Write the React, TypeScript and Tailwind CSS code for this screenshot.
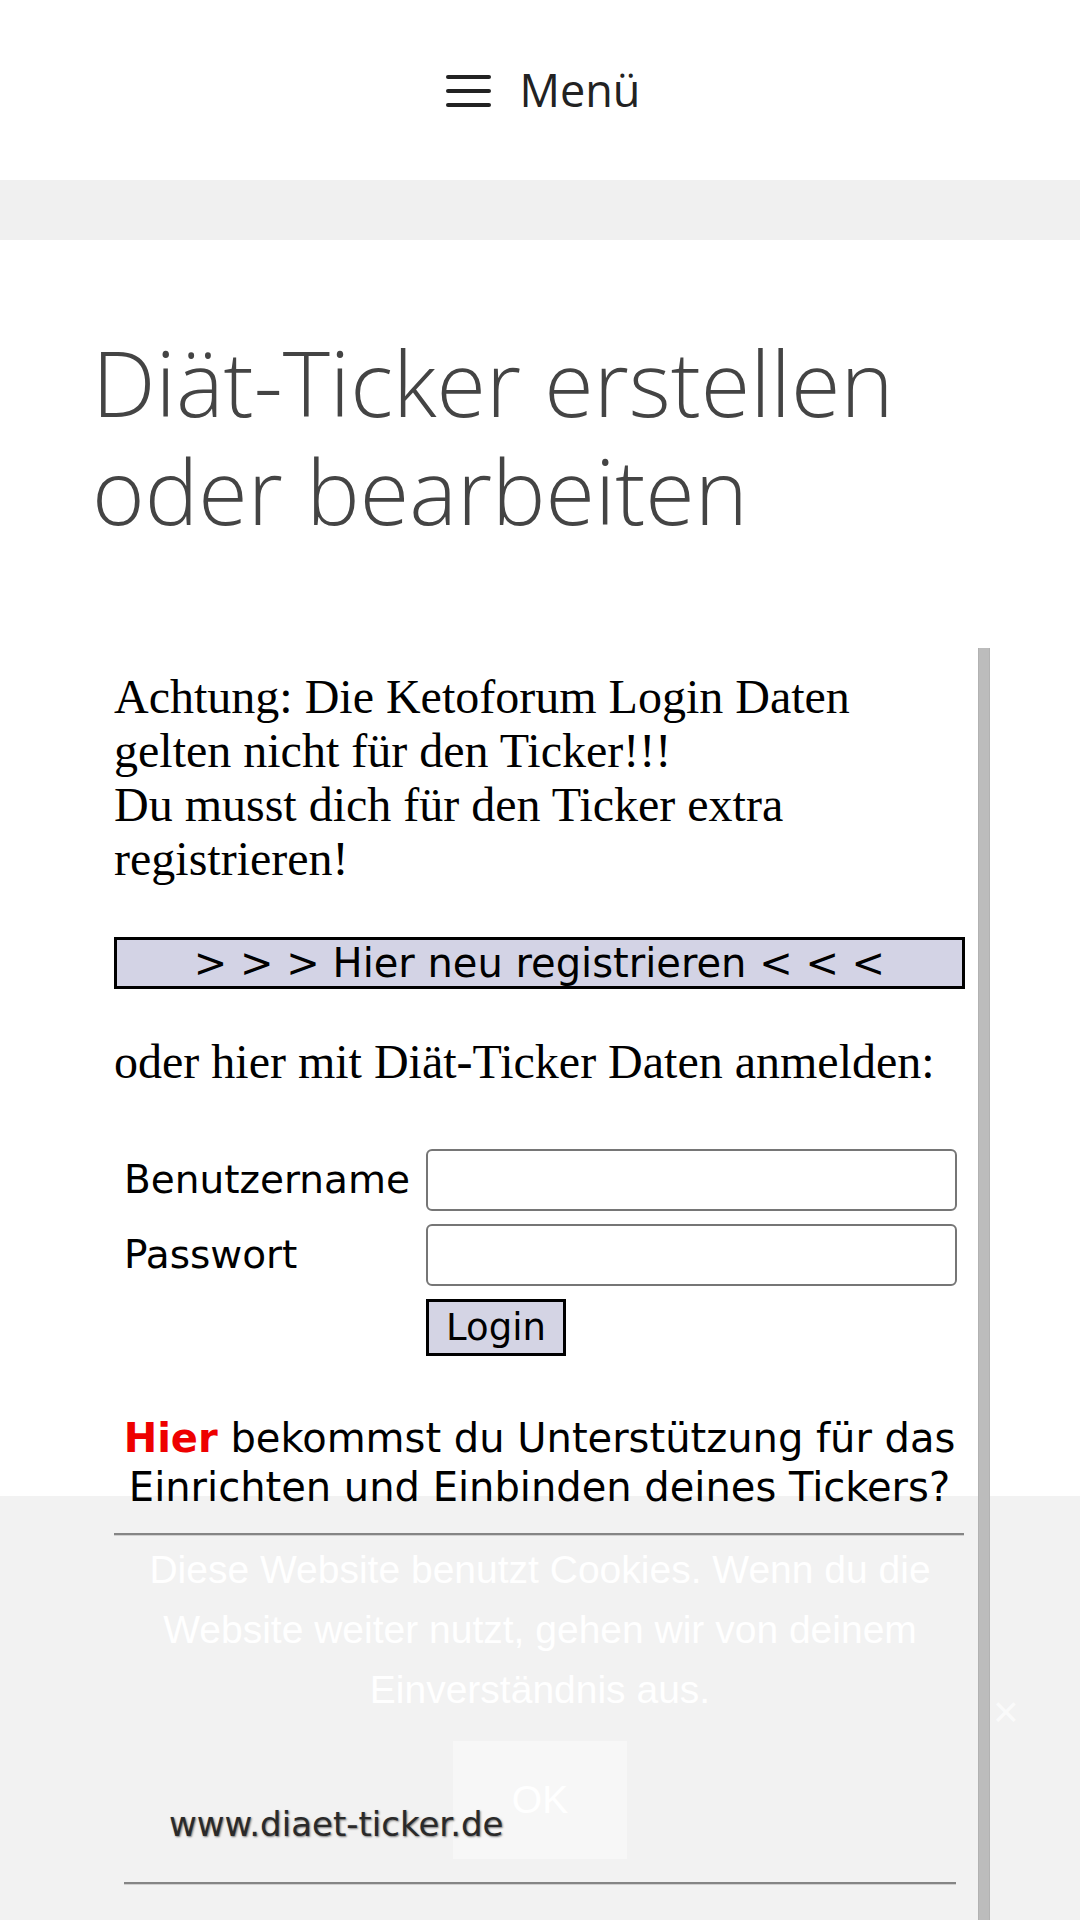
import React from "react";

export default function App() {
  return (
    <div className="relative w-[1080px] h-[1920px] overflow-hidden bg-white">
      {/* Cookie banner (sits under the transparent ticker frame) */}
      <div className="absolute z-[1] left-0 right-0 top-[1496px] bottom-0 bg-black/5 flex flex-col items-center pt-[44px]">
        <p className="font-['Liberation_Sans',Arial,sans-serif] text-[39px] leading-[60px] text-white text-center whitespace-nowrap">
          Diese Website benutzt Cookies. Wenn du die
          <br />
          Website weiter nutzt, gehen wir von deinem
          <br />
          Einverständnis aus.
        </p>
        <div className="mt-[21px] w-[174px] h-[118px] bg-white/40 flex items-center justify-center font-['Liberation_Sans',Arial,sans-serif] text-[39px] text-white">
          OK
        </div>
        <span className="absolute left-[993px] top-[194px] font-['Liberation_Sans',Arial,sans-serif] text-[44px] leading-[44px] text-white/70">
          ×
        </span>
      </div>

      <div className="relative z-[2]">
        {/* Header */}
        <header className="h-[180px] flex items-center justify-center gap-[29px] pl-[6px] bg-white">
          <svg width="45" height="32" viewBox="0 0 45 32" className="mt-[2px]">
            <line x1="2" y1="2" x2="43" y2="2" stroke="#222" strokeWidth="4" strokeLinecap="round" />
            <line x1="2" y1="16" x2="43" y2="16" stroke="#222" strokeWidth="4" strokeLinecap="round" />
            <line x1="2" y1="30" x2="43" y2="30" stroke="#222" strokeWidth="4" strokeLinecap="round" />
          </svg>
          <span className="font-['Open_Sans',sans-serif] text-[45px] text-[#222]">Menü</span>
        </header>
        <div className="h-[60px] bg-[#f0f0f0]" />

        <main className="pl-[92px] pt-[88px]">
          <h1 className="font-['Open_Sans',sans-serif] font-light text-[90px] leading-[108px] text-[#444]">
            Diät-Ticker erstellen
            <br />
            oder bearbeiten
          </h1>

          <div className="mt-[104px] flex h-[1272px] w-[898px]">
            <div className="w-[886px] pl-[22px] pr-[13px] pt-[22px]">
              <p className="font-['Liberation_Serif',serif] text-[48px] leading-[54px] text-black whitespace-nowrap">
                Achtung: Die Ketoforum Login Daten
                <br />
                gelten nicht für den Ticker!!!
                <br />
                Du musst dich für den Ticker extra
                <br />
                registrieren!
              </p>

              <div className="mt-[51px] h-[52px] border-[3px] border-black bg-[#d3d3e5] flex items-center justify-center font-['DejaVu_Sans',sans-serif] text-[40px] leading-[46px] text-black whitespace-nowrap">
                &gt; &gt; &gt; Hier neu registrieren &lt; &lt; &lt;
              </div>

              <p className="mt-[46px] font-['Liberation_Serif',serif] text-[48px] leading-[54px] text-black whitespace-nowrap">
                oder hier mit Diät-Ticker Daten anmelden:
              </p>

              <div className="mt-[60px] ml-[10px] grid grid-cols-[302px_531px] gap-y-[13px] items-center font-['DejaVu_Sans',sans-serif] text-[39px] text-black">
                <span className="leading-[62px]">Benutzername</span>
                <div className="h-[62px] rounded-[6px] border-2 border-[#767676] bg-white" />
                <span className="leading-[62px]">Passwort</span>
                <div className="h-[62px] rounded-[6px] border-2 border-[#767676] bg-white" />
                <span />
                <div>
                  <div className="w-[140px] h-[57px] border-[3px] border-black bg-[#d4d4e4] flex items-center justify-center text-[37px] leading-[44px]">
                    Login
                  </div>
                </div>
              </div>

              <div className="mt-[58px] text-center font-['DejaVu_Sans',sans-serif] text-[40px] leading-[49px] text-black whitespace-nowrap">
                <span className="font-bold text-[#ee0000]">Hier</span> bekommst du Unterstützung für das
                <br />
                Einrichten und Einbinden deines Tickers?
              </div>

              <div className="mt-[21px] h-[3px] bg-[#858585] border-b border-[#d0d0d0] mr-[1px]" />

              <div className="mt-[268px] ml-[55px] font-['DejaVu_Sans',sans-serif] text-[34px] leading-[40px] text-[#2a2a2a] [text-shadow:1px_1px_2px_rgba(0,0,0,0.5)]">
                www.diaet-ticker.de
              </div>

              <div className="mt-[38px] ml-[10px] mr-[9px] h-[3px] bg-[#858585] border-b border-[#d0d0d0]" />
            </div>
            <div className="w-[12px] h-full bg-[#bcbcbc] border-x border-[#b2b2b2]" />
          </div>
        </main>
      </div>
    </div>
  );
}
